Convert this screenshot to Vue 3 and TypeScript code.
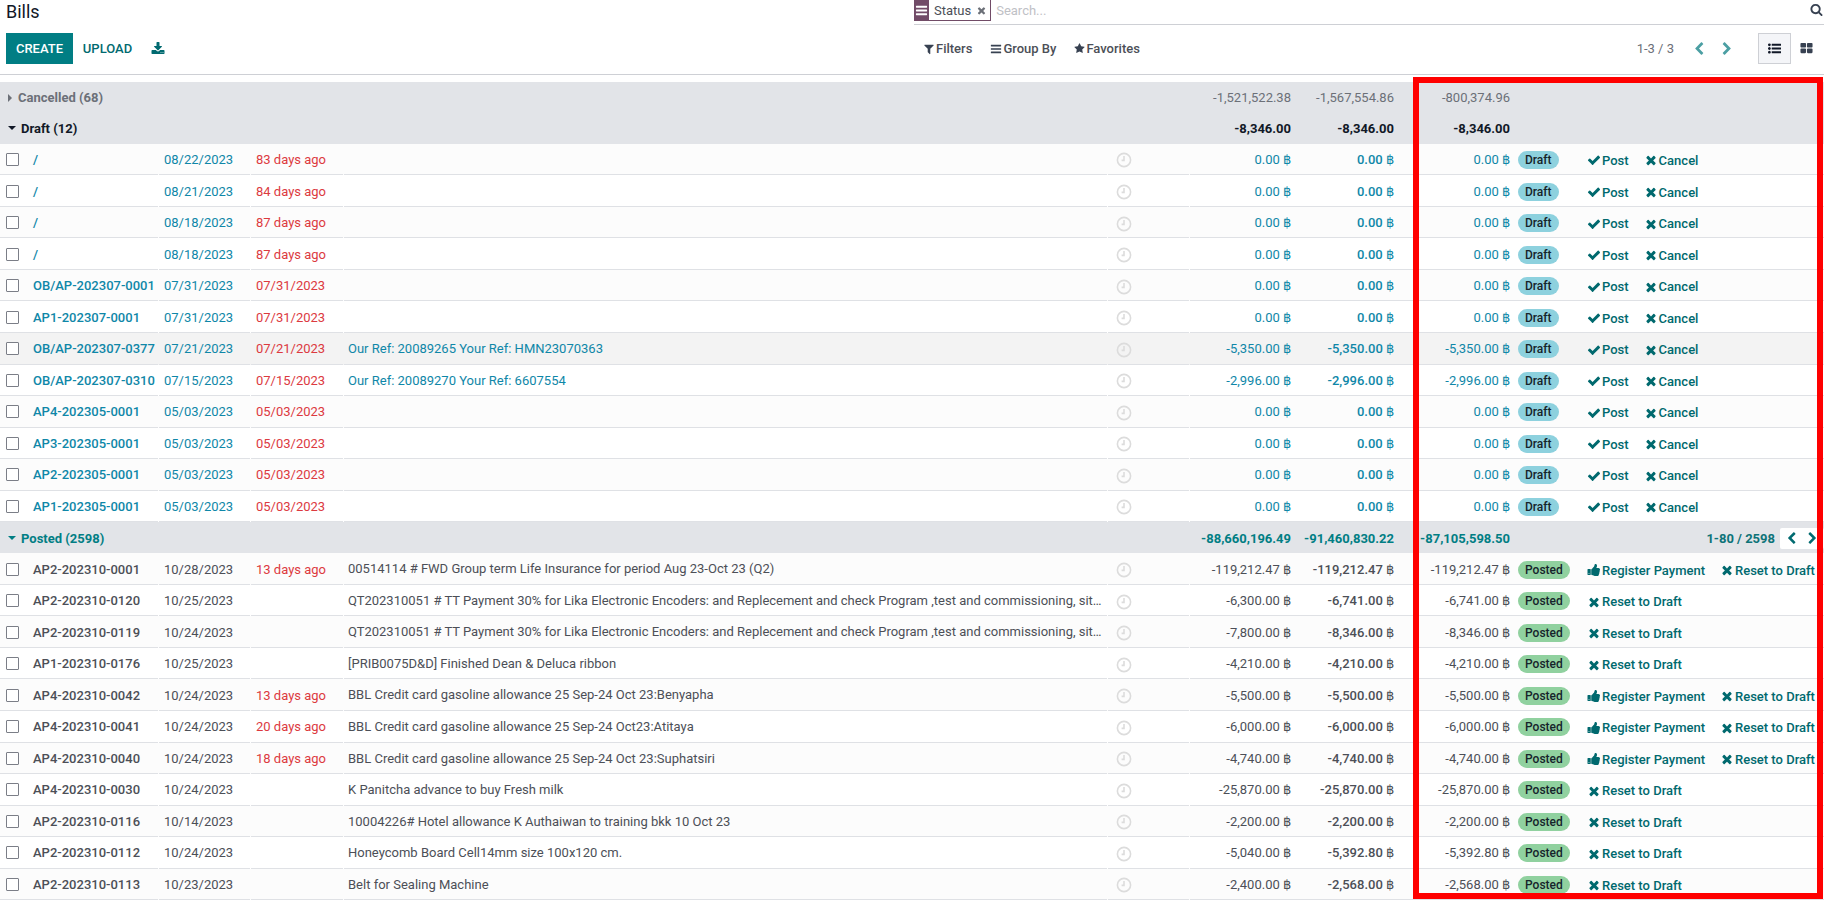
<template>
  <div class="page">
    <header class="panel">
      <h1 class="title">Bills</h1>
      <div class="search">
        <span class="facet">
          <span class="facet-icon"><svg class="ico" viewBox="0 0 1792 1792"><path :d="icons.bars" /></svg></span>
          <span class="facet-label">Status</span>
          <svg class="ico facet-x" viewBox="0 0 1792 1792"><path :d="icons.times" /></svg>
        </span>
        <input class="search-input" placeholder="Search..." />
        <svg class="ico search-ico" viewBox="0 0 1792 1792"><path :d="icons.search" /></svg>
      </div>
      <div class="main-actions">
        <button class="btn-primary">CREATE</button>
        <button class="btn-link">UPLOAD</button>
        <svg class="ico download" viewBox="0 0 1792 1792"><path :d="icons.download" /></svg>
      </div>
      <div class="tools">
        <div class="filters">
          <span class="filter f1"><svg class="ico" viewBox="0 0 1792 1792"><path :d="icons.filter" /></svg>Filters</span>
          <span class="filter f2"><svg class="ico" viewBox="0 0 1792 1792"><path :d="icons.bars" /></svg>Group By</span>
          <span class="filter f3"><svg class="ico" viewBox="0 0 1792 1792"><path :d="icons.star" /></svg>Favorites</span>
        </div>
        <div class="pager">
          <span>1-3 / 3</span>
          <svg class="ico pager-arrow first" viewBox="0 0 1792 1792"><path :d="icons.left" /></svg>
          <svg class="ico pager-arrow" viewBox="0 0 1792 1792"><path :d="icons.right" /></svg>
        </div>
        <span class="view active"><svg class="ico" viewBox="0 0 1792 1792"><path :d="icons.list" /></svg></span>
        <span class="view kanban"><svg class="ico" viewBox="0 0 1792 1792"><path :d="icons.kanban" /></svg></span>
      </div>
    </header>

    <section class="list">
      <template v-for="group in groups" :key="group.name">
        <div class="row group" :class="group.cls">
          <div class="group-name">
            <span class="caret" :class="group.open ? 'down' : 'right'"></span>{{ group.name }}
          </div>
          <div class="amount total a1">{{ group.totals[0] }}</div>
          <div class="amount total">{{ group.totals[1] }}</div>
          <div class="amount total last">{{ group.totals[2] }}</div>
          <div v-if="group.pager" class="group-pager">
            <span>{{ group.pager }}</span>
            <span class="group-arrows">
              <svg class="ico" viewBox="0 0 1792 1792"><path :d="icons.left" /></svg>
              <svg class="ico" viewBox="0 0 1792 1792"><path :d="icons.right" /></svg>
            </span>
          </div>
        </div>
        <div
          v-for="(bill, i) in group.bills"
          :key="group.name + i"
          class="row bill"
          :class="[group.name.startsWith('Draft') ? 'draft' : 'posted', { striped: i % 2 === 0, hovered: bill.hover }]"
        >
          <div class="cell check"><input type="checkbox" class="box" /></div>
          <div class="cell gap number">{{ bill.number }}</div>
          <div class="cell gap date">{{ bill.date }}</div>
          <div class="cell gap due">{{ bill.due }}</div>
          <div class="cell gap ref">{{ bill.ref }}</div>
          <div class="cell gap activity">
            <svg class="clock" viewBox="0 0 16 16">
              <circle cx="8" cy="8" r="6.6" />
              <path d="M8 4v4.4H5.6" />
            </svg>
          </div>
          <div class="cell amount">{{ bill.a1 }} ฿</div>
          <div class="cell amount strong">{{ bill.a2 }} ฿</div>
          <div class="cell amount last">{{ bill.a3 }} ฿</div>
          <div class="cell status">
            <span class="badge" :class="group.name.startsWith('Draft') ? 'badge-draft' : 'badge-posted'">
              {{ group.name.startsWith('Draft') ? 'Draft' : 'Posted' }}
            </span>
          </div>
          <div class="cell actions">
            <template v-if="group.name.startsWith('Draft')">
              <span class="act"><svg class="ico" viewBox="0 0 1792 1792"><path :d="icons.check" /></svg>Post</span>
              <span class="act"><svg class="ico" viewBox="0 0 1792 1792"><path :d="icons.times" /></svg>Cancel</span>
            </template>
            <template v-else>
              <span v-if="bill.pay" class="act"><svg class="ico" viewBox="0 0 1792 1792"><path :d="icons.thumb" /></svg>Register Payment</span>
              <span class="act"><svg class="ico" viewBox="0 0 1792 1792"><path :d="icons.times" /></svg>Reset to Draft</span>
            </template>
          </div>
        </div>
      </template>
    </section>

    <div class="highlight"></div>
  </div>
</template>

<script setup lang="ts">
interface Bill {
  number: string
  date: string
  due: string
  ref: string
  a1: string
  a2: string
  a3: string
  pay?: boolean
  hover?: boolean
}

interface Group {
  name: string
  cls: string
  open: boolean
  totals: string[]
  pager?: string
  bills: Bill[]
}

// FontAwesome 4 shapes, 1792 grid
const icons = {
  bars: 'M1664 1344v128q0 26-19 45t-45 19h-1408q-26 0-45-19t-19-45v-128q0-26 19-45t45-19h1408q26 0 45 19t19 45zm0-512v128q0 26-19 45t-45 19h-1408q-26 0-45-19t-19-45v-128q0-26 19-45t45-19h1408q26 0 45 19t19 45zm0-512v128q0 26-19 45t-45 19h-1408q-26 0-45-19t-19-45v-128q0-26 19-45t45-19h1408q26 0 45 19t19 45z',
  times: 'M1490 1322q0 40-28 68l-136 136q-28 28-68 28t-68-28l-294-294-294 294q-28 28-68 28t-68-28l-136-136q-28-28-28-68t28-68l294-294-294-294q-28-28-28-68t28-68l136-136q28-28 68-28t68 28l294 294 294-294q28-28 68-28t68 28l136 136q28 28 28 68t-28 68l-294 294 294 294q28 28 28 68z',
  check: 'M1671 566q0 40-28 68l-724 724-136 136q-28 28-68 28t-68-28l-136-136-362-362q-28-28-28-68t28-68l136-136q28-28 68-28t68 28l294 295 656-657q28-28 68-28t68 28l136 136q28 28 28 68z',
  left: 'M1427 301l-531 531 531 531q19 19 19 45t-19 45l-166 166q-19 19-45 19t-45-19l-742-742q-19-19-19-45t19-45l742-742q19-19 45-19t45 19l166 166q19 19 19 45t-19 45z',
  right: 'M1363 877l-742 742q-19 19-45 19t-45-19l-166-166q-19-19-19-45t19-45l531-531-531-531q-19-19-19-45t19-45l166-166q19-19 45-19t45 19l742 742q19 19 19 45t-19 45z',
  star: 'M1728 647q0 22-26 48l-363 354 86 500q1 7 1 20 0 21-10.5 35.5t-30.5 14.5q-19 0-40-12l-449-236-449 236q-22 12-40 12-21 0-31.5-14.5t-10.5-35.5q0-6 2-20l86-500-364-354q-25-27-25-48 0-37 56-46l502-73 225-455q19-41 49-41t49 41l225 455 502 73q56 9 56 46z',
  search: 'M1216 832q0-185-131.5-316.5t-316.5-131.5-316.5 131.5-131.5 316.5 131.5 316.5 316.5 131.5 316.5-131.5 131.5-316.5zm512 832q0 52-38 90t-90 38q-54 0-90-38l-343-342q-179 124-399 124-143 0-273.5-55.5t-225-150-150-225-55.5-273.5 55.5-273.5 150-225 225-150 273.5-55.5 273.5 55.5 225 150 150 225 55.5 273.5q0 220-124 399l343 343q37 37 37 90z',
  filter: 'M1595 295q17 41-14 70l-493 493v742q0 42-39 59-13 5-25 5-27 0-45-19l-256-256q-19-19-19-45v-486l-493-493q-31-29-14-70 17-39 59-39h1280q42 0 59 39z',
  thumb: 'M320 1344q0-26-19-45t-45-19q-27 0-45.5 19t-18.5 45q0 27 18.5 45.5t45.5 18.5q26 0 45-18.5t19-45.5zm160-512v640q0 26-19 45t-45 19h-288q-26 0-45-19t-19-45v-640q0-26 19-45t45-19h288q26 0 45 19t19 45zm1184 0q0 86-55 149 15 44 15 76 3 76-43 137 17 56 0 117-15 57-54 94 9 112-49 181-64 76-197 78h-129q-66 0-144-15.5t-121.5-29-120.5-39.5q-123-43-158-44-26-1-45-19.5t-19-44.5v-641q0-25 18-43.5t43-20.5q24-2 76-59t101-121q68-87 101-120 18-18 31-48t17.5-48.5 13.5-60.5q7-39 12.5-61t19.5-52 34-50q19-19 45-19 46 0 82.5 10.5t60 26 40 40.5 24 45 12 50 5 45 .5 39q0 38-9.5 76t-19 60-27.5 56q-3 6-10 18t-11 22-8 24h277q78 0 135 57t57 135z',
  download: 'M1344 1344q0-26-19-45t-45-19-45 19-19 45 19 45 45 19 45-19 19-45zm256 0q0-26-19-45t-45-19-45 19-19 45 19 45 45 19 45-19 19-45zm128-224v320q0 40-28 68t-68 28h-1472q-40 0-68-28t-28-68v-320q0-40 28-68t68-28h465l135 136q58 56 136 56t136-56l136-136h464q40 0 68 28t28 68zm-325-569q17 41-14 70l-448 448q-18 19-45 19t-45-19l-448-448q-31-29-14-70 17-39 59-39h256v-448q0-26 19-45t45-19h256q26 0 45 19t19 45v448h256q42 0 59 39z',
  kanban: 'M832 1024v384q0 52-38 90t-90 38h-512q-52 0-90-38t-38-90v-384q0-52 38-90t90-38h512q52 0 90 38t38 90zm0-768v384q0 52-38 90t-90 38h-512q-52 0-90-38t-38-90v-384q0-52 38-90t90-38h512q52 0 90 38t38 90zm896 768v384q0 52-38 90t-90 38h-512q-52 0-90-38t-38-90v-384q0-52 38-90t90-38h512q52 0 90 38t38 90zm0-768v384q0 52-38 90t-90 38h-512q-52 0-90-38t-38-90v-384q0-52 38-90t90-38h512q52 0 90 38t38 90z',
  list: 'M384 1408q0 80-56 136t-136 56-136-56-56-136 56-136 136-56 136 56 56 136zm0-512q0 80-56 136t-136 56-136-56-56-136 56-136 136-56 136 56 56 136zm1408 416v192q0 13-9.5 22.5t-22.5 9.5h-1216q-13 0-22.5-9.5t-9.5-22.5v-192q0-13 9.5-22.5t22.5-9.5h1216q13 0 22.5 9.5t9.5 22.5zm-1408-928q0 80-56 136t-136 56-136-56-56-136 56-136 136-56 136 56 56 136zm1408 416v192q0 13-9.5 22.5t-22.5 9.5h-1216q-13 0-22.5-9.5t-9.5-22.5v-192q0-13 9.5-22.5t22.5-9.5h1216q13 0 22.5 9.5t9.5 22.5zm0-512v192q0 13-9.5 22.5t-22.5 9.5h-1216q-13 0-22.5-9.5t-9.5-22.5v-192q0-13 9.5-22.5t22.5-9.5h1216q13 0 22.5 9.5t9.5 22.5z'
}

const qt = 'QT202310051 # TT Payment 30% for Lika Electronic Encoders: and Replecement and check Program ,test and commissioning, site work and training'

function draft(number: string, date: string, due: string, ref = '', amt = '0.00', hover = false): Bill {
  return { number, date, due, ref, a1: amt, a2: amt, a3: amt, hover }
}

const groups: Group[] = [
  {
    name: 'Cancelled (68)',
    cls: 'muted',
    open: false,
    totals: ['-1,521,522.38', '-1,567,554.86', '-800,374.96'],
    bills: []
  },
  {
    name: 'Draft (12)',
    cls: 'dark',
    open: true,
    totals: ['-8,346.00', '-8,346.00', '-8,346.00'],
    bills: [
      draft('/', '08/22/2023', '83 days ago'),
      draft('/', '08/21/2023', '84 days ago'),
      draft('/', '08/18/2023', '87 days ago'),
      draft('/', '08/18/2023', '87 days ago'),
      draft('OB/AP-202307-0001', '07/31/2023', '07/31/2023'),
      draft('AP1-202307-0001', '07/31/2023', '07/31/2023'),
      draft('OB/AP-202307-0377', '07/21/2023', '07/21/2023', 'Our Ref: 20089265 Your Ref: HMN23070363', '-5,350.00', true),
      draft('OB/AP-202307-0310', '07/15/2023', '07/15/2023', 'Our Ref: 20089270 Your Ref: 6607554', '-2,996.00'),
      draft('AP4-202305-0001', '05/03/2023', '05/03/2023'),
      draft('AP3-202305-0001', '05/03/2023', '05/03/2023'),
      draft('AP2-202305-0001', '05/03/2023', '05/03/2023'),
      draft('AP1-202305-0001', '05/03/2023', '05/03/2023')
    ]
  },
  {
    name: 'Posted (2598)',
    cls: 'teal',
    open: true,
    totals: ['-88,660,196.49', '-91,460,830.22', '-87,105,598.50'],
    pager: '1-80 / 2598',
    bills: [
      { number: 'AP2-202310-0001', date: '10/28/2023', due: '13 days ago', ref: '00514114 # FWD Group term Life Insurance for period Aug 23-Oct 23 (Q2)', a1: '-119,212.47', a2: '-119,212.47', a3: '-119,212.47', pay: true },
      { number: 'AP2-202310-0120', date: '10/25/2023', due: '', ref: qt, a1: '-6,300.00', a2: '-6,741.00', a3: '-6,741.00' },
      { number: 'AP2-202310-0119', date: '10/24/2023', due: '', ref: qt, a1: '-7,800.00', a2: '-8,346.00', a3: '-8,346.00' },
      { number: 'AP1-202310-0176', date: '10/25/2023', due: '', ref: '[PRIB0075D&D] Finished Dean & Deluca ribbon', a1: '-4,210.00', a2: '-4,210.00', a3: '-4,210.00' },
      { number: 'AP4-202310-0042', date: '10/24/2023', due: '13 days ago', ref: 'BBL Credit card gasoline allowance 25 Sep-24 Oct 23:Benyapha', a1: '-5,500.00', a2: '-5,500.00', a3: '-5,500.00', pay: true },
      { number: 'AP4-202310-0041', date: '10/24/2023', due: '20 days ago', ref: 'BBL Credit card gasoline allowance 25 Sep-24 Oct23:Atitaya', a1: '-6,000.00', a2: '-6,000.00', a3: '-6,000.00', pay: true },
      { number: 'AP4-202310-0040', date: '10/24/2023', due: '18 days ago', ref: 'BBL Credit card gasoline allowance 25 Sep-24 Oct 23:Suphatsiri', a1: '-4,740.00', a2: '-4,740.00', a3: '-4,740.00', pay: true },
      { number: 'AP4-202310-0030', date: '10/24/2023', due: '', ref: 'K Panitcha advance to buy Fresh milk', a1: '-25,870.00', a2: '-25,870.00', a3: '-25,870.00' },
      { number: 'AP2-202310-0116', date: '10/14/2023', due: '', ref: '10004226# Hotel allowance K Authaiwan to training bkk 10 Oct 23', a1: '-2,200.00', a2: '-2,200.00', a3: '-2,200.00' },
      { number: 'AP2-202310-0112', date: '10/24/2023', due: '', ref: 'Honeycomb Board Cell14mm size 100x120 cm.', a1: '-5,040.00', a2: '-5,392.80', a3: '-5,392.80' },
      { number: 'AP2-202310-0113', date: '10/23/2023', due: '', ref: 'Belt for Sealing Machine', a1: '-2,400.00', a2: '-2,568.00', a3: '-2,568.00' }
    ]
  }
]
</script>

<style>
html,
body {
  margin: 0;
  height: 100%;
  overflow: hidden;
  background: #fff;
}
</style>

<style scoped>
.page {
  position: relative;
  height: 901px;
  overflow: hidden;
  font-family: Roboto, "Liberation Sans", sans-serif;
  font-size: 13px;
  color: #4c4f57;
}
.ico {
  width: 13px;
  height: 13px;
  fill: currentColor;
  flex: none;
}

/* control panel */
.panel {
  display: grid;
  grid-template-columns: 914px 1fr;
  grid-template-rows: 25px 50px;
  border-bottom: 1px solid #ced0d5;
  height: 75px;
  box-sizing: border-box;
}
.title {
  margin: 0;
  padding-left: 6px;
  font-size: 18px;
  font-weight: 400;
  line-height: 24px;
  color: #111827;
}
.search {
  display: flex;
  align-items: flex-start;
  border-bottom: 1px solid #ced0d5;
}
.facet {
  display: flex;
  align-items: center;
  height: 21px;
  box-sizing: border-box;
  border: 1px solid #714b67;
  border-top: 0;
  border-left: 0;
  color: #4c4f57;
}
.facet-icon {
  display: flex;
  align-items: center;
  justify-content: center;
  width: 15px;
  height: 21px;
  background: #714b67;
  color: #fff;
}
.facet-label {
  margin-left: 5px;
}
.facet-x {
  width: 11px;
  height: 11px;
  margin: 0 3px 0 5px;
  color: #6c7078;
}
.search-input {
  flex: 1;
  border: 0;
  outline: 0;
  padding: 0 0 0 5px;
  height: 20px;
  font: inherit;
  color: #4c4f57;
  background: transparent;
}
.search-input::placeholder {
  color: #bfc1c6;
  opacity: 1;
}
.search-ico {
  margin: 3px 1px 0 0;
  color: #374151;
}
.main-actions {
  display: flex;
  align-items: center;
  height: 31px;
  margin-top: 8px;
  padding-left: 6px;
}
.btn-primary,
.btn-link {
  border: 0;
  font: inherit;
  font-weight: 500;
  height: 31px;
  cursor: pointer;
}
.btn-primary {
  width: 67px;
  background: #017e84;
  color: #fff;
}
.btn-link {
  width: 69px;
  background: none;
  color: #016a70;
}
.download {
  width: 14px;
  height: 14px;
  margin-left: 9px;
  color: #016a70;
}
.tools {
  display: flex;
  align-items: center;
  height: 31px;
  margin-top: 8px;
}
.filters {
  display: flex;
  align-items: center;
  flex: 1;
  padding-left: 9px;
  color: #4c4f57;
  font-weight: 500;
}
.filter {
  display: inline-flex;
  align-items: center;
}
.filter .ico {
  width: 12px;
  height: 12px;
  margin-right: 1px;
  color: #374151;
}
.f2 {
  margin-left: 18px;
}
.f3 {
  margin-left: 18px;
}
.f3 .ico {
  width: 11px;
  height: 11px;
}
.pager {
  display: flex;
  align-items: center;
  color: #6c7078;
  margin-right: 24px;
}
.pager-arrow {
  width: 14px;
  height: 14px;
  margin-left: 14px;
  color: #4b9fa3;
}
.pager-arrow.first {
  margin-left: 18px;
}
.view {
  display: flex;
  align-items: center;
  justify-content: center;
  width: 33px;
  height: 31px;
  box-sizing: border-box;
  color: #374151;
}
.view.active {
  border: 1px solid #ced0d5;
  background: #f4f5f8;
  color: #111827;
}
.view.kanban {
  width: 30px;
  margin-right: 3px;
}

/* list */
.list {
  padding-top: 7px;
}
.row {
  display: grid;
  grid-template-columns: 26px 133px 92px 93px 764px 82px 108px 103px 115px 64px 1fr;
  align-items: stretch;
  white-space: nowrap;
}
.group {
  height: 31px;
  box-sizing: border-box;
  background: #e2e4e8;
  font-weight: 700;
}
.group + .group {
  height: 30.7px;
}
.group.muted {
  color: #6c7078;
}
.group.muted .total {
  font-weight: 400;
}
.group.dark {
  color: #111827;
}
.group.teal {
  color: #017e84;
  padding-top: 1px;
}
.group-name {
  grid-column: 1 / 7;
  padding-left: 8px;
  display: flex;
  align-items: center;
}
.caret {
  display: inline-block;
  margin-right: 5px;
}
.caret.right {
  border-left: 4px solid currentColor;
  border-top: 4px solid transparent;
  border-bottom: 4px solid transparent;
  margin-right: 6px;
}
.caret.down {
  border-top: 4px solid currentColor;
  border-left: 4px solid transparent;
  border-right: 4px solid transparent;
}
.group-pager {
  grid-column: 10 / 12;
  display: flex;
  align-items: center;
  justify-content: flex-end;
  font-weight: 700;
  color: #0d7378;
}
.group-arrows {
  display: flex;
  align-items: center;
  justify-content: space-between;
  width: 44px;
  height: 21px;
  margin-left: 5px;
  padding: 0 5px;
  box-sizing: border-box;
  background: #fff;
  border-radius: 2px;
  color: #016a70;
}
.bill {
  height: 31.55px;
  background: #fff;
}
.bill.striped {
  background: #fcfcfc;
}
.bill.hovered {
  background: #f3f3f3;
}
.cell {
  display: flex;
  align-items: center;
  min-width: 0;
  padding-top: 1px;
  border-bottom: 1px solid #dfe1e5;
  overflow: hidden;
}
.gap {
  margin-right: 1px;
}
.check {
  padding-left: 6px;
}
.box {
  appearance: none;
  width: 13px;
  height: 13px;
  margin: 0;
  border: 1px solid #7b7e87;
  border-radius: 1px;
  background: #fff;
}
.number {
  padding-left: 7px;
  font-weight: 500;
}
.date {
  padding-left: 5px;
}
.due {
  padding-left: 5px;
  color: #dc3a3f;
}
.ref {
  padding-left: 4px;
  display: block;
  line-height: 30px;
  padding-right: 3px;
  text-overflow: ellipsis;
}
.activity {
  padding-left: 8px;
  padding-top: 3px;
}
.clock {
  width: 16px;
  height: 16px;
  fill: none;
  stroke: #dcdcdc;
  stroke-width: 1.6;
}
.amount {
  display: flex;
  align-items: center;
  justify-content: flex-end;
  padding-right: 7px;
}
.amount.last {
  padding-right: 6px;
}
.total.a1 {
  grid-column: 7;
}
.strong {
  font-weight: 500;
}
.draft {
  color: #0f87a8;
}
.status {
  padding-left: 2px;
  padding-top: 2px;
}
.badge {
  display: inline-block;
  height: 18px;
  line-height: 18px;
  padding: 0 7px;
  border-radius: 9px;
  font-size: 12px;
  font-weight: 500;
  color: #16242b;
}
.badge-draft {
  background: #8dd1de;
}
.badge-posted {
  background: #90d19f;
}
.actions {
  padding-top: 3px;
  color: #00696e;
  font-weight: 500;
}
.act {
  display: inline-flex;
  align-items: center;
  padding: 0 8px;
}
.act .ico {
  width: 14px;
  height: 14px;
  margin-left: -1px;
  margin-right: 1px;
}

/* annotation drawn over the screenshot */
.highlight {
  position: absolute;
  left: 1413px;
  top: 77px;
  width: 410px;
  height: 822px;
  box-sizing: border-box;
  border: 6px solid #f00;
  pointer-events: none;
}
</style>
